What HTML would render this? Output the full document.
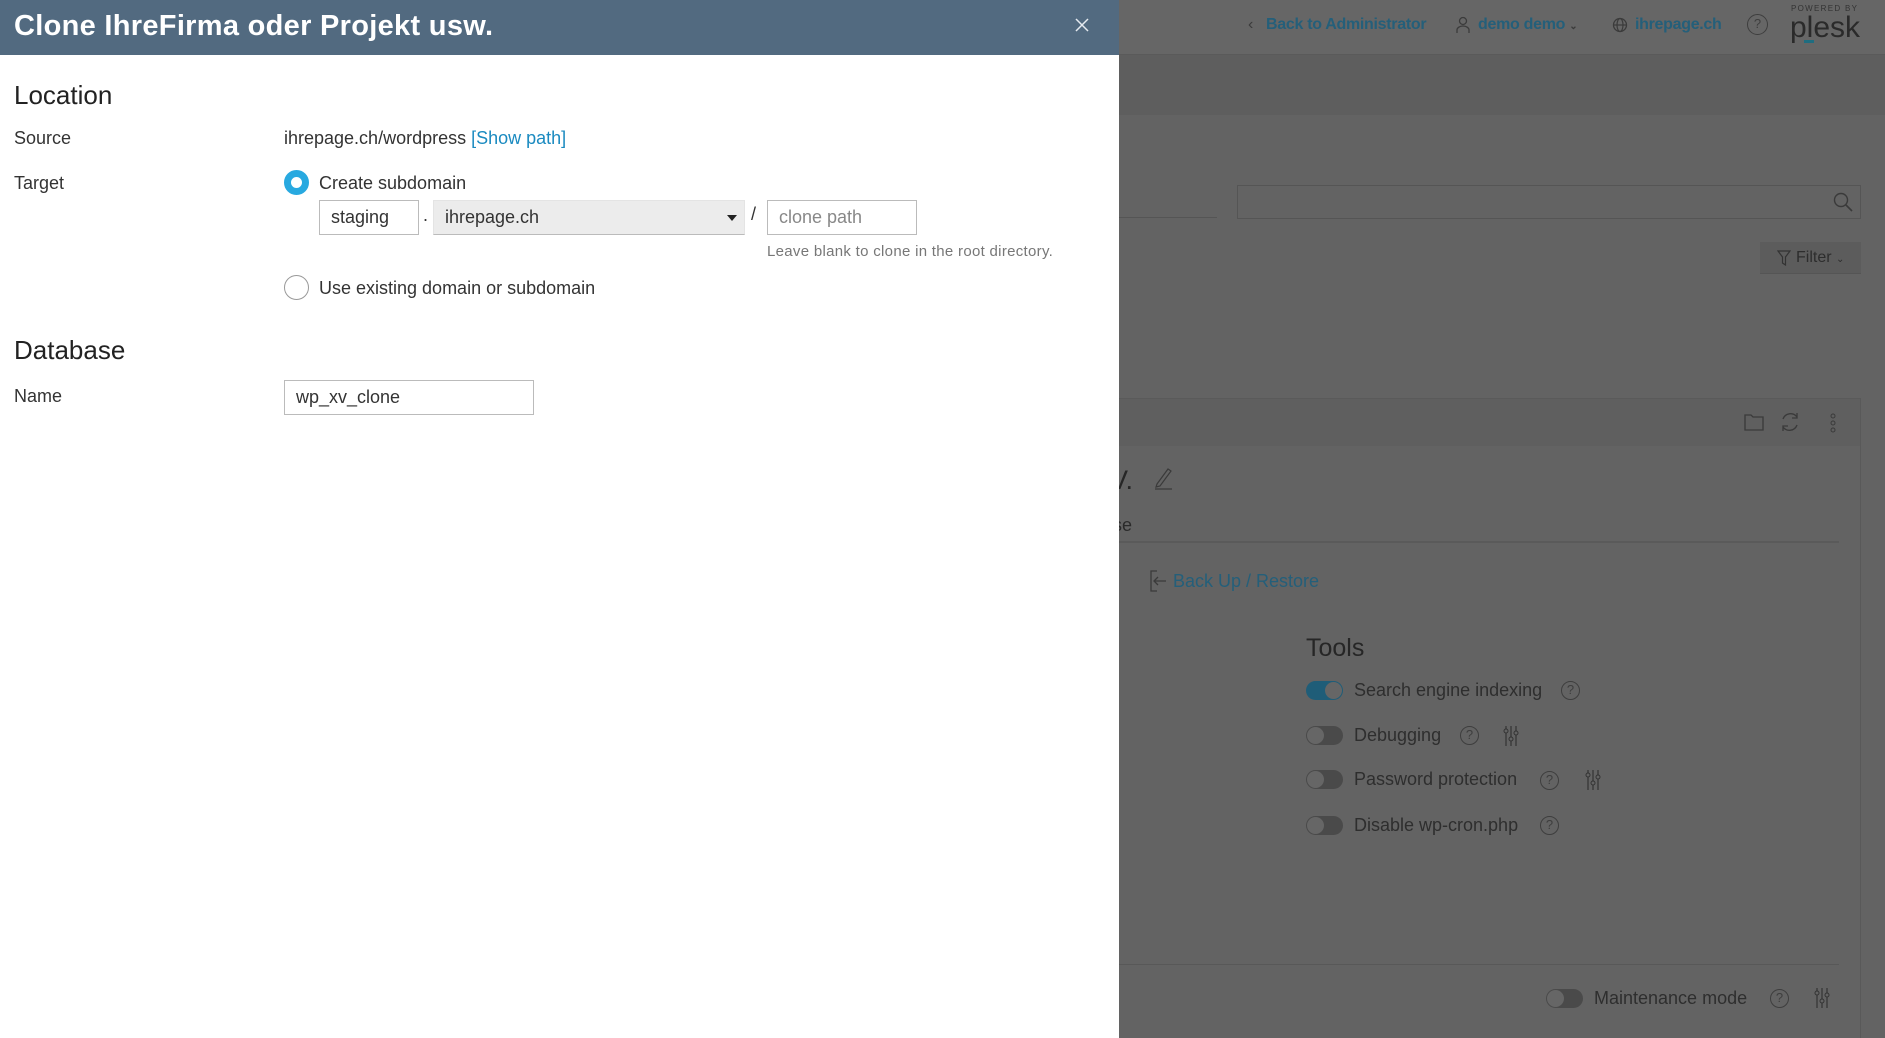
<!DOCTYPE html>
<html><head><meta charset="utf-8"><style>
*{box-sizing:border-box;margin:0;padding:0}
body{width:1885px;height:1038px;overflow:hidden;position:relative;font-family:"Liberation Sans",sans-serif;background:#636363}
.a{position:absolute;white-space:nowrap}
.panel{position:absolute;left:0;top:0;width:1119px;height:1038px;background:#fff}
.hdr{position:absolute;left:0;top:0;width:1119px;height:55px;background:#526a80}
.lab{font-size:18px;color:#333}
.inp{position:absolute;border:1px solid #bbb;background:#fff;font-size:18px;color:#333;padding:0 11px;line-height:32px;height:35px}
.blue{color:#245f7a}
.tog{position:absolute;width:37px;height:19px;border-radius:10px;background:#4a4a4a}
.tog::after{content:"";position:absolute;left:1px;top:1px;width:17px;height:17px;border-radius:50%;background:#666}
.tog.on{background:#1f5d78}
.tog.on::after{left:19px}
.q{position:absolute;width:19px;height:19px;border:1.5px solid #3e3e3e;border-radius:50%;font-size:13px;color:#3e3e3e;text-align:center;line-height:16px}
.t{font-size:18px;color:#2e2e2e}
</style></head><body>
<div class="a" style="left:1119px;top:0;width:766px;height:55px;background:#666;border-bottom:1px solid #5a5a5a"></div>
<div class="a" style="left:1119px;top:55px;width:766px;height:60px;background:#5e5e5e"></div>
<div class="a" style="left:1248px;top:16px;font-size:16px;color:#3b3b3b">‹</div>
<div class="a blue" style="left:1266px;top:16px;font-size:16px;font-weight:bold;letter-spacing:-0.3px">Back to Administrator</div>
<svg class="a" style="left:1455px;top:16px" width="16" height="18" viewBox="0 0 16 18"><circle cx="8" cy="5" r="3.5" fill="none" stroke="#3b3b3b" stroke-width="1.3"/><path d="M2 17v-3a6 4 0 0 1 12 0v3" fill="none" stroke="#3b3b3b" stroke-width="1.3"/></svg>
<div class="a blue" style="left:1478px;top:16px;font-size:16px;font-weight:bold;letter-spacing:-0.3px">demo demo <span style="font-size:10px;color:#3b3b3b">⌄</span></div>
<svg class="a" style="left:1612px;top:17px" width="16" height="16" viewBox="0 0 16 16"><circle cx="8" cy="8" r="6.5" fill="none" stroke="#3b3b3b" stroke-width="1.3"/><ellipse cx="8" cy="8" rx="3" ry="6.5" fill="none" stroke="#3b3b3b" stroke-width="1.2"/><path d="M1.5 8h13" stroke="#3b3b3b" stroke-width="1.2"/></svg>
<div class="a blue" style="left:1635px;top:16px;font-size:16px;font-weight:bold;letter-spacing:-0.3px">ihrepage.ch</div>
<div class="q" style="left:1747px;top:14px;width:21px;height:21px;line-height:18px">?</div>
<div class="a" style="left:1791px;top:4px;font-size:8px;letter-spacing:1.3px;color:#333">POWERED BY</div>
<div class="a" style="left:1790px;top:11px;font-size:30px;color:#2a2a2a">plesk</div>
<div class="a" style="left:1804px;top:40px;width:10px;height:3px;background:#1f6d80"></div>

<div class="a" style="left:1119px;top:217px;width:98px;height:1px;background:#555"></div>
<div class="a" style="left:1237px;top:185px;width:624px;height:34px;border:1px solid #555;background:#636363"></div>
<svg class="a" style="left:1833px;top:192px" width="20" height="20" viewBox="0 0 20 20"><circle cx="8" cy="8" r="6.5" fill="none" stroke="#3a3a3a" stroke-width="1.4"/><path d="M13 13l6 6" stroke="#3a3a3a" stroke-width="1.6"/></svg>
<div class="a" style="left:1760px;top:242px;width:101px;height:32px;background:#5c5c5c;border-bottom:1px solid #555"></div>
<svg class="a" style="left:1777px;top:250px" width="14" height="16" viewBox="0 0 14 16"><path d="M1 1h12L8.5 7v8l-3-2V7z" fill="none" stroke="#333" stroke-width="1.2"/></svg>
<div class="a" style="left:1796px;top:249px;font-size:16px;color:#2d2d2d">Filter <span style="font-size:10px">⌄</span></div>

<div class="a" style="left:1119px;top:398px;width:742px;height:48px;background:#5f5f5f;border-top:1px solid #5a5a5a"></div>
<div class="a" style="left:1860px;top:398px;width:1px;height:640px;background:#595959"></div>
<svg class="a" style="left:1744px;top:413px" width="20" height="18" viewBox="0 0 20 18"><path d="M1 2h6l2 2h10v13H1z" fill="none" stroke="#3a3a3a" stroke-width="1.3"/></svg>
<svg class="a" style="left:1779px;top:411px" width="22" height="22" viewBox="0 0 22 22"><path d="M4 8a8 8 0 0 1 14-2M18 14a8 8 0 0 1-14 2" fill="none" stroke="#3a3a3a" stroke-width="1.4"/><path d="M18 2v5h-5M4 20v-5h5" fill="none" stroke="#3a3a3a" stroke-width="1.3"/></svg>
<svg class="a" style="left:1829px;top:412px" width="8" height="22" viewBox="0 0 8 22"><circle cx="4" cy="4" r="2" fill="none" stroke="#3a3a3a"/><circle cx="4" cy="11" r="2" fill="none" stroke="#3a3a3a"/><circle cx="4" cy="18" r="2" fill="none" stroke="#3a3a3a"/></svg>
<div class="a" style="left:1110px;top:465px;font-size:27px;color:#262626">V.</div>
<svg class="a" style="left:1153px;top:466px" width="22" height="24" viewBox="0 0 22 24"><path d="M4 18L15 3l3 2L7 20l-4 1z" fill="none" stroke="#3a3a3a" stroke-width="1.2"/><path d="M2 23h17" stroke="#3a3a3a" stroke-width="1.3"/></svg>
<div class="a" style="left:1113px;top:515px;font-size:18px;color:#2a2a2a">se</div>
<div class="a" style="left:1119px;top:541px;width:720px;height:2px;background:#5a5a5a"></div>
<svg class="a" style="left:1150px;top:570px" width="18" height="22" viewBox="0 0 18 22"><path d="M7 1H1v20h6M4 11h12M8 7l-4 4 4 4" fill="none" stroke="#3a3a3a" stroke-width="1.3"/></svg>
<div class="a blue" style="left:1173px;top:571px;font-size:18px">Back Up / Restore</div>
<div class="a" style="left:1306px;top:634px;font-size:25px;color:#262626">Tools</div>
<div class="tog on" style="left:1306px;top:681px"></div><div class="a t" style="left:1354px;top:680px">Search engine indexing</div><div class="q" style="left:1561px;top:681px">?</div>
<div class="tog" style="left:1306px;top:726px"></div><div class="a t" style="left:1354px;top:725px">Debugging</div><div class="q" style="left:1460px;top:726px">?</div>
<div class="tog" style="left:1306px;top:770px"></div><div class="a t" style="left:1354px;top:769px">Password protection</div><div class="q" style="left:1540px;top:771px">?</div>
<div class="tog" style="left:1306px;top:816px"></div><div class="a t" style="left:1354px;top:815px">Disable wp-cron.php</div><div class="q" style="left:1540px;top:816px">?</div>
<svg class="a" style="left:1503px;top:725px" width="16" height="22" viewBox="0 0 16 22"><path d="M3 1v20M8 1v20M13 1v20" stroke="#333" stroke-width="1.2"/><circle cx="3" cy="6" r="2" fill="#636363" stroke="#333"/><circle cx="8" cy="14" r="2" fill="#636363" stroke="#333"/><circle cx="13" cy="8" r="2" fill="#636363" stroke="#333"/></svg>
<svg class="a" style="left:1585px;top:769px" width="16" height="22" viewBox="0 0 16 22"><path d="M3 1v20M8 1v20M13 1v20" stroke="#333" stroke-width="1.2"/><circle cx="3" cy="6" r="2" fill="#636363" stroke="#333"/><circle cx="8" cy="14" r="2" fill="#636363" stroke="#333"/><circle cx="13" cy="8" r="2" fill="#636363" stroke="#333"/></svg>
<div class="a" style="left:1119px;top:964px;width:720px;height:1px;background:#585858"></div>
<div class="tog" style="left:1546px;top:989px"></div><div class="a t" style="left:1594px;top:988px">Maintenance mode</div><div class="q" style="left:1770px;top:989px">?</div>
<svg class="a" style="left:1814px;top:987px" width="16" height="22" viewBox="0 0 16 22"><path d="M3 1v20M8 1v20M13 1v20" stroke="#333" stroke-width="1.2"/><circle cx="3" cy="6" r="2" fill="#636363" stroke="#333"/><circle cx="8" cy="14" r="2" fill="#636363" stroke="#333"/><circle cx="13" cy="8" r="2" fill="#636363" stroke="#333"/></svg>

<div class="panel"></div>
<div class="hdr"></div>
<div class="a" style="left:14px;top:10px;font-size:29px;font-weight:bold;color:#fff;letter-spacing:0.3px">Clone IhreFirma oder Projekt usw.</div>
<svg class="a" style="left:1075px;top:18px" width="14" height="14" viewBox="0 0 14 14"><path d="M1 1l12 12M13 1L1 13" stroke="#e6ebf0" stroke-width="1.5"/></svg>

<div class="a" style="left:14px;top:80px;font-size:26px;color:#222">Location</div>
<div class="a lab" style="left:14px;top:128px">Source</div>
<div class="a lab" style="left:284px;top:128px">ihrepage.ch/wordpress <span style="color:#1a8ac0">[Show path]</span></div>
<div class="a lab" style="left:14px;top:173px">Target</div>
<div class="a" style="left:284px;top:170px;width:25px;height:25px;border-radius:50%;border:7px solid #28a9e0;background:#fff"></div>
<div class="a lab" style="left:319px;top:173px">Create subdomain</div>
<div class="inp" style="left:319px;top:200px;width:100px">staging</div>
<div class="a lab" style="left:423px;top:205px">.</div>
<div class="inp" style="left:433px;top:200px;width:312px;background:#ececec;border-color:#e4e4e4;border-bottom-color:#bbb">ihrepage.ch</div>
<div class="a" style="left:727px;top:215px;width:0;height:0;border-left:5px solid transparent;border-right:5px solid transparent;border-top:6px solid #222"></div>
<div class="a lab" style="left:751px;top:204px">/</div>
<div class="inp" style="left:767px;top:200px;width:150px;color:#888">clone path</div>
<div class="a" style="left:767px;top:243px;font-size:15px;color:#777;letter-spacing:0.3px">Leave blank to clone in the root directory.</div>
<div class="a" style="left:284px;top:275px;width:25px;height:25px;border-radius:50%;border:1.5px solid #999;background:#fff"></div>
<div class="a lab" style="left:319px;top:278px">Use existing domain or subdomain</div>

<div class="a" style="left:14px;top:335px;font-size:26px;color:#222">Database</div>
<div class="a lab" style="left:14px;top:386px">Name</div>
<div class="inp" style="left:284px;top:380px;width:250px">wp_xv_clone</div>
</body></html>
